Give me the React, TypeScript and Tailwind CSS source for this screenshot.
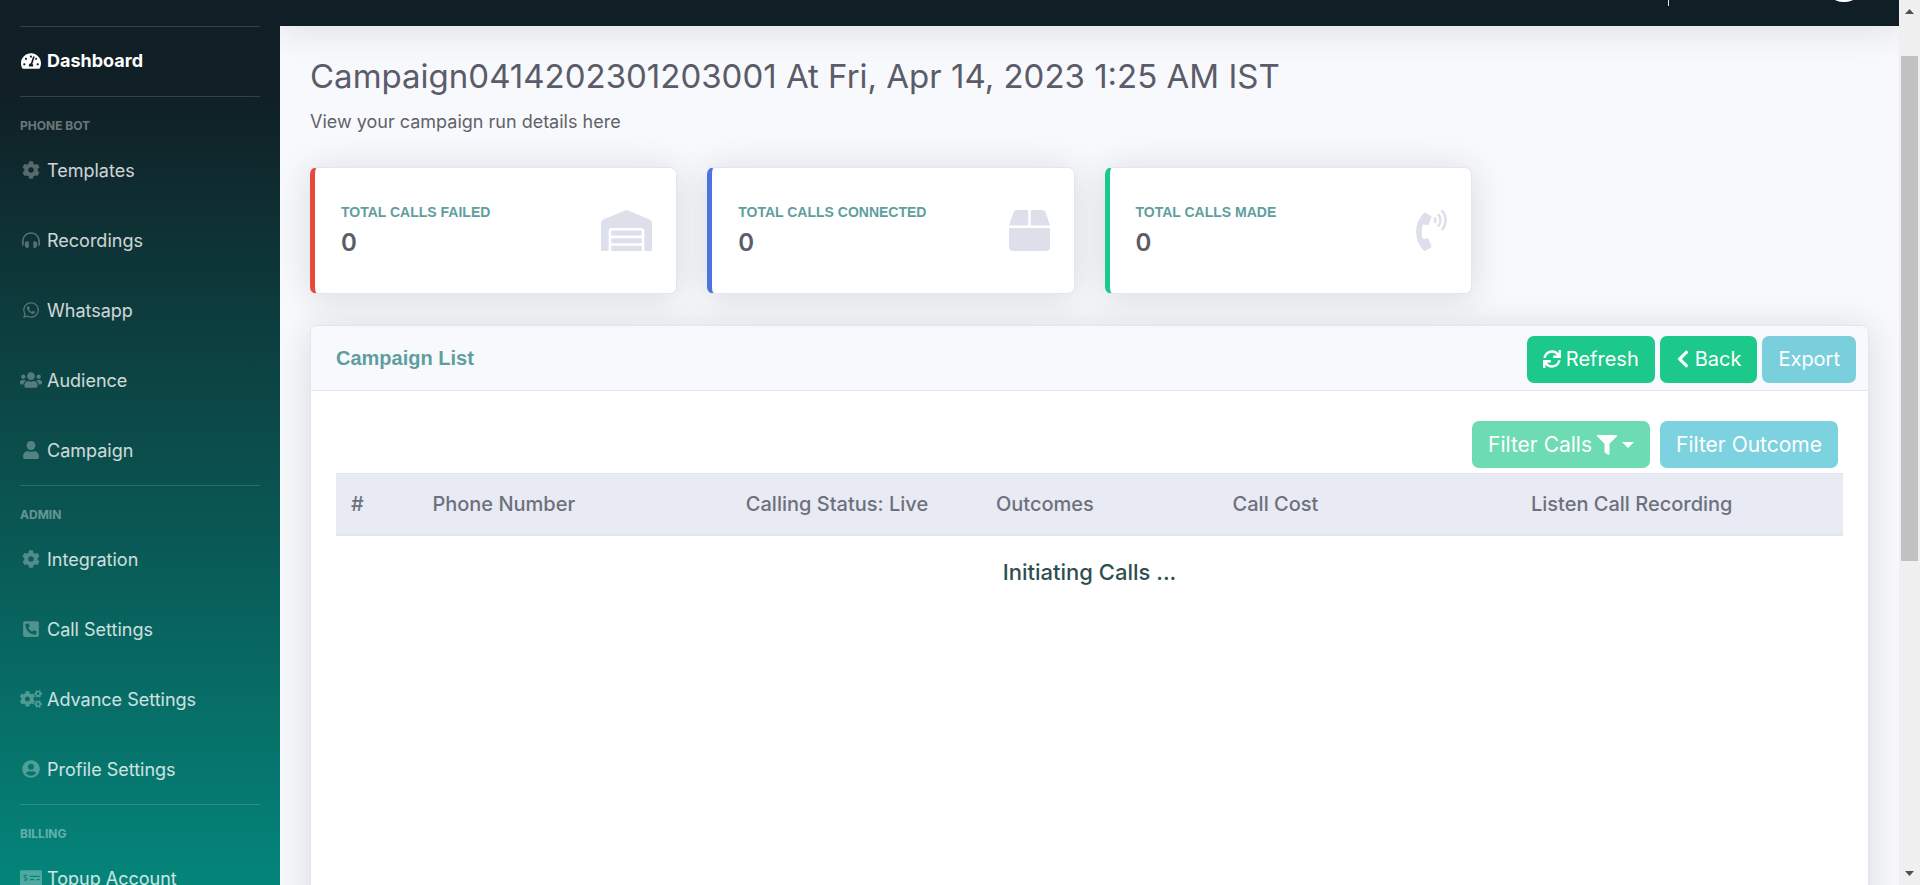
import type { ReactNode } from 'react';
import type { IconType } from 'react-icons';
import {
  FaBox,
  FaChevronLeft,
  FaCog,
  FaCogs,
  FaFilter,
  FaHeadphonesAlt,
  FaMoneyCheckAlt,
  FaPhoneSquareAlt,
  FaPhoneVolume,
  FaSync,
  FaTachometerAlt,
  FaUser,
  FaUserCircle,
  FaUsers,
  FaWarehouse,
  FaWhatsapp,
} from 'react-icons/fa';

type Item = { label: string; icon: IconType; iconWidth: string };

const sections: { title: string; items: Item[] }[] = [
  {
    title: 'Phone Bot',
    items: [
      { label: 'Templates', icon: FaCog, iconWidth: 'w-[18px]' },
      { label: 'Recordings', icon: FaHeadphonesAlt, iconWidth: 'w-[18px]' },
      { label: 'Whatsapp', icon: FaWhatsapp, iconWidth: 'w-[16px]' },
      { label: 'Audience', icon: FaUsers, iconWidth: 'w-[22px]' },
      { label: 'Campaign', icon: FaUser, iconWidth: 'w-[16px]' },
    ],
  },
  {
    title: 'Admin',
    items: [
      { label: 'Integration', icon: FaCog, iconWidth: 'w-[18px]' },
      { label: 'Call Settings', icon: FaPhoneSquareAlt, iconWidth: 'w-[16px]' },
      { label: 'Advance Settings', icon: FaCogs, iconWidth: 'w-[22px]' },
      { label: 'Profile Settings', icon: FaUserCircle, iconWidth: 'w-[18px]' },
    ],
  },
  {
    title: 'Billing',
    items: [{ label: 'Topup Account', icon: FaMoneyCheckAlt, iconWidth: 'w-[22px]' }],
  },
];

const stats: { label: string; value: number; icon: IconType; iconWidth: string; accent: string }[] = [
  {
    label: 'Total Calls Failed',
    value: 0,
    icon: FaWarehouse,
    iconWidth: 'w-[51px]',
    accent: 'border-l-[#e74a3b]',
  },
  {
    label: 'Total Calls Connected',
    value: 0,
    icon: FaBox,
    iconWidth: 'w-[41px]',
    accent: 'border-l-[#4e73df]',
  },
  {
    label: 'Total Calls Made',
    value: 0,
    icon: FaPhoneVolume,
    iconWidth: 'w-[31px]',
    accent: 'border-l-[#1cc88a]',
  },
];

const columns = [
  { label: '#', width: 'w-[5.4%]' },
  { label: 'Phone Number', width: 'w-[20.8%]' },
  { label: 'Calling Status: Live', width: 'w-[16.6%]' },
  { label: 'Outcomes', width: 'w-[15.7%]' },
  { label: 'Call Cost', width: 'w-[19.8%]' },
  { label: 'Listen Call Recording', width: 'w-[21.7%]' },
];

function NavLink({ item, active = false }: { item: Item; active?: boolean }) {
  const Icon = item.icon;
  return (
    <a
      href="#"
      className={`flex items-center gap-[5px] px-5 text-[18px] ${
        active ? 'h-[69px] pb-0.5 font-bold text-white' : 'h-[70px] text-white/80'
      }`}
    >
      <span className={`flex w-[22px] shrink-0 justify-center ${active ? '' : 'text-white/30'}`}>
        <Icon className={`h-[18px] shrink-0 ${item.iconWidth}`} />
      </span>
      <span>{item.label}</span>
    </a>
  );
}

function Sidebar() {
  return (
    <nav className="w-[280px] shrink-0 overflow-hidden bg-[linear-gradient(180deg,#101f25_10%,#04857a_100%)] pt-[26px]">
      <hr className="mx-5 border-white/15" />
      <NavLink item={{ label: 'Dashboard', icon: FaTachometerAlt, iconWidth: 'w-[20px]' }} active />
      {sections.map((section) => (
        <section key={section.title}>
          <hr className="mx-5 border-white/15" />
          <h2 className="px-5 pt-5 text-[12px] leading-[18px] font-bold text-white/40 uppercase">
            {section.title}
          </h2>
          {section.items.map((item) => (
            <NavLink key={item.label} item={item} />
          ))}
        </section>
      ))}
    </nav>
  );
}

function Button({ tone, children }: { tone: string; children: ReactNode }) {
  return (
    <button type="button" className={`flex h-[47px] items-center gap-[5px] rounded-[7px] px-4 text-white ${tone}`}>
      {children}
    </button>
  );
}

function Scrollbar() {
  return (
    <div aria-hidden="true" className="flex w-[21px] shrink-0 flex-col items-center bg-[#f0f0f0] py-[9px]">
      <svg width="9" height="5" viewBox="0 0 9 5" fill="#505050">
        <path d="M4.500 0L9 5H0z" />
      </svg>
      <div className="mt-[42px] h-[58.2%] w-[17px] bg-[#c1c1c1]" />
      <svg className="mt-auto" width="9" height="5" viewBox="0 0 9 5" fill="#505050">
        <path d="M0 0h9L4.500 5z" />
      </svg>
    </div>
  );
}

export default function App() {
  return (
    <div className="flex h-screen overflow-hidden bg-[#f8f9fc] font-['Inter',sans-serif] text-[#5a5c69]">
      <Sidebar />
      <div className="min-w-0 flex-1 overflow-hidden">
        <header className="flex h-[26px] items-start justify-end bg-[#101f25] pr-[34px] shadow-[0_3px_35px_rgba(33,40,50,0.15)]">
          <div className="h-[6px] w-px bg-[#e3e6f0]" />
          <div className="-mt-10 ml-[154px] size-[42px] rounded-full bg-white" />
        </header>

        <main className="px-[30px] pt-7">
          <h1 className="text-[33px] leading-[44px] font-normal">
            Campaign0414202301203001 At Fri, Apr 14, 2023 1:25 AM IST
          </h1>
          <p className="mt-[10px] text-[18px] leading-7 text-[#60626a]">View your campaign run details here</p>

          <div className="mt-[31px] grid grid-cols-4 gap-[30px]">
            {stats.map(({ label, value, icon: Icon, iconWidth, accent }) => (
              <div
                key={label}
                className={`flex h-[127px] items-center justify-between rounded-[7px] border border-l-[5px] border-[#e3e6f0] bg-white pr-6 pl-[26px] shadow-[0_3px_35px_rgba(33,40,50,0.15)] ${accent}`}
              >
                <div>
                  <div className="font-['Liberation_Sans',Arial,sans-serif] text-[14px] leading-5 font-bold text-[#5f9ea0] uppercase">
                    {label}
                  </div>
                  <div className="mt-1 text-[24px] leading-[34px] font-semibold">{value}</div>
                </div>
                <Icon className={`h-[41px] text-[#dddfeb] ${iconWidth}`} />
              </div>
            ))}
          </div>

          <section className="mt-[31px] min-h-[900px] overflow-hidden rounded-[7px] border border-[#e3e6f0] bg-white shadow-[0_3px_35px_rgba(33,40,50,0.15)]">
            <div className="flex h-[65px] items-center justify-between border-b border-[#e3e6f0] bg-[#f8f9fc] pr-3 pl-[25px]">
              <h2 className="font-['Liberation_Sans',Arial,sans-serif] text-[20px] font-bold text-[#5f9ea0]">
                Campaign List
              </h2>
              <div className="flex gap-[5px] pt-0.5 text-[20px]">
                <Button tone="bg-[#1cc88a]">
                  <FaSync className="size-[18px]" />
                  Refresh
                </Button>
                <Button tone="bg-[#1cc88a]">
                  <FaChevronLeft className="h-5 w-[14px]" />
                  Back
                </Button>
                <Button tone="bg-[#7acfdc]">Export</Button>
              </div>
            </div>

            <div className="px-[25px] pt-[30px]">
              <div className="mb-[5px] flex justify-end gap-[10px] pr-[5px] text-[21px]">
                <Button tone="bg-[#6ddcb3]">
                  Filter Calls
                  <FaFilter className="size-5" />
                  <svg width="12" height="6" viewBox="0 0 12 6" fill="currentColor">
                    <path d="M0 0h12L6 6z" />
                  </svg>
                </Button>
                <Button tone="bg-[#7cd2df]">Filter Outcome</Button>
              </div>

              <table className="w-full table-fixed border-collapse">
                <thead>
                  <tr className="h-[61px] border-t border-b-2 border-[#e3e6f0] bg-[#e8ebf3]">
                    {columns.map((column) => (
                      <th
                        key={column.label}
                        className={`${column.width} px-[15px] text-left text-[20px] font-medium whitespace-nowrap text-[#6e707e]`}
                      >
                        {column.label}
                      </th>
                    ))}
                  </tr>
                </thead>
                <tbody>
                  <tr>
                    <td colSpan={6} className="pt-5 text-center text-[22px] leading-8 font-medium text-[#2f4f4f]">
                      Initiating Calls ...
                    </td>
                  </tr>
                </tbody>
              </table>
            </div>
          </section>
        </main>
      </div>
      <Scrollbar />
    </div>
  );
}
